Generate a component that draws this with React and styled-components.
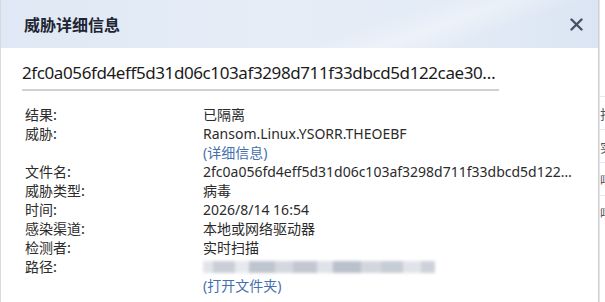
import React from "react";
import styled, { createGlobalStyle } from "styled-components";

const GlobalStyle = createGlobalStyle`
    html, body {
        margin: 0;
        padding: 0;
        background: #ffffff;
        overflow: hidden;
    }
    body {
        font-family: "Noto Sans", "Noto Sans CJK SC", sans-serif;
    }
`;

const Page = styled.div`
    display: flex;
    width: 605px;
    height: 302px;
    overflow: hidden;
`;

const Dialog = styled.div`
    width: 597px;
    height: 302px;
    flex-shrink: 0;
    border-left: 1px solid #d6d9de;
    border-right: 1px solid #cfd3d8;
    background: #ffffff;
    display: flex;
    flex-direction: column;
`;

const Header = styled.div`
    height: 48px;
    display: flex;
    align-items: center;
    justify-content: space-between;
    padding: 0 14px 0 23px;
    background:
        linear-gradient(160deg, rgba(255, 255, 255, 0) 60%, rgba(255, 255, 255, 0.35) 70%, rgba(255, 255, 255, 0) 80%),
        linear-gradient(90deg, #dfe8f4 0%, #e6edf7 45%, #e3ebf6 75%, #dbe5f3 100%);
`;

const Title = styled.h1`
    margin: 0;
    font-family: "Noto Sans CJK SC", sans-serif;
    font-size: 16px;
    font-weight: 700;
    color: #1e2532;
`;

const CloseButton = styled.button`
    width: 16px;
    height: 16px;
    padding: 0;
    border: none;
    background: none;
    display: flex;
    align-items: center;
    justify-content: center;
    cursor: pointer;
`;

const Content = styled.div`
    padding: 13px 0 0 21px;
`;

const HashTitle = styled.div`
    width: 477px;
    padding-bottom: 4px;
    border-bottom: 2px solid #cfd1d4;
    font-family: "Noto Sans", sans-serif;
    font-size: 17px;
    line-height: 24px;
    color: #1b1b1b;
    white-space: nowrap;
    letter-spacing: -0.4px;
`;

const InfoGrid = styled.div`
    display: grid;
    grid-template-columns: 178px 1fr;
    margin-top: 14px;
    padding-left: 3px;
    font-size: 14px;
    line-height: 19px;
    color: #2b2b2b;
`;

const Label = styled.div`
    font-family: "Noto Sans CJK SC", sans-serif;
`;

const Value = styled.div`
    font-family: "Noto Sans", "Noto Sans CJK SC", sans-serif;
    white-space: nowrap;
`;

const LinkText = styled.a`
    display: block;
    color: #4470ad;
    text-decoration: none;
    font-family: "Noto Sans", "Noto Sans CJK SC", sans-serif;
`;

const Blurred = styled.div`
    display: flex;
    height: 19px;
    align-items: center;
    filter: blur(1.6px);
    opacity: 0.9;
`;

const BlurBlock = styled.span`
    display: block;
    height: ${(p) => p.$h || 12}px;
    width: ${(p) => p.$w}px;
    background: ${(p) => p.$c};
`;

const Behind = styled.div`
    flex: 1;
    padding-top: 96px;
    display: flex;
    flex-direction: column;
    border-left: 1px solid #e2e4e7;
`;

const BehindRow = styled.div`
    height: 32px;
    border-top: 1px solid #e6e8eb;
    display: flex;
    align-items: center;
    overflow: hidden;
    font-family: "Noto Sans CJK SC", sans-serif;
    font-size: 13px;
    color: #555;
    white-space: nowrap;
`;

const CloseIcon = () => (
    <svg width="13" height="13" viewBox="0 0 13 13">
        <path
            d="M1.5 1.5 L11.5 11.5 M11.5 1.5 L1.5 11.5"
            stroke="#465262"
            strokeWidth="2.4"
            strokeLinecap="round"
        />
    </svg>
);

const rows = [
    { label: "结果:", value: "已隔离" },
    { label: "威胁:", value: "Ransom.Linux.YSORR.THEOEBF", link: "(详细信息)" },
    { label: "文件名:", value: "2fc0a056fd4eff5d31d06c103af3298d711f33dbcd5d122…" },
    { label: "威胁类型:", value: "病毒" },
    { label: "时间:", value: "2026/8/14 16:54" },
    { label: "感染渠道:", value: "本地或网络驱动器" },
    { label: "检测者:", value: "实时扫描" },
];

const blurBlocks = [
    { w: 10, c: "#dfe2e8" },
    { w: 22, c: "#c5cad3" },
    { w: 14, c: "#e4e7ec" },
    { w: 26, c: "#b9bfca" },
    { w: 18, c: "#d0d4db" },
    { w: 24, c: "#bcc2cc" },
    { w: 16, c: "#dcdfe5" },
    { w: 28, c: "#b4bbc7" },
    { w: 20, c: "#cfd3da" },
    { w: 22, c: "#c2c8d1" },
    { w: 18, c: "#dee1e6" },
    { w: 14, c: "#c9cdd5" },
];

const App = () => {
    return (
        <>
            <GlobalStyle />
            <Page>
                <Dialog>
                    <Header>
                        <Title>威胁详细信息</Title>
                        <CloseButton aria-label="关闭">
                            <CloseIcon />
                        </CloseButton>
                    </Header>
                    <Content>
                        <HashTitle>2fc0a056fd4eff5d31d06c103af3298d711f33dbcd5d122cae30…</HashTitle>
                        <InfoGrid>
                            {rows.map((r) => (
                                <React.Fragment key={r.label}>
                                    <Label>{r.label}</Label>
                                    <Value>
                                        {r.value}
                                        {r.link && <LinkText href="#">{r.link}</LinkText>}
                                    </Value>
                                </React.Fragment>
                            ))}
                            <Label>路径:</Label>
                            <Value>
                                <Blurred>
                                    {blurBlocks.map((b, i) => (
                                        <BlurBlock key={i} $w={b.w} $c={b.c} />
                                    ))}
                                </Blurred>
                                <LinkText href="#">(打开文件夹)</LinkText>
                            </Value>
                        </InfoGrid>
                    </Content>
                </Dialog>
                <Behind>
                    <BehindRow>扫</BehindRow>
                    <BehindRow>实</BehindRow>
                    <BehindRow>嘻</BehindRow>
                    <BehindRow>嘻</BehindRow>
                </Behind>
            </Page>
        </>
    );
};

export default App;
